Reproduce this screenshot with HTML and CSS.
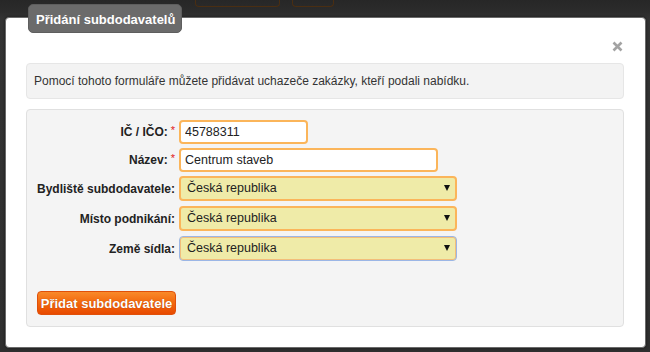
FILE: index.html
```html
<!DOCTYPE html>
<html lang="cs">
<head>
<meta charset="utf-8">
<title>Přidání subdodavatelů</title>
<link rel="stylesheet" href="styles.css">
</head>
<body>
<div class="backdrop-top">
  <span class="bg-btn bg-btn-a"></span>
  <span class="bg-btn bg-btn-b"></span>
</div>
<div class="modal">
  <div class="modal-title">Přidání subdodavatelů</div>
  <span class="modal-close" aria-label="Zavřít"><svg width="11" height="11" viewBox="0 0 11 11"><path d="M1.5 1.5 L9.5 9.5 M9.5 1.5 L1.5 9.5" stroke="#a3a3a3" stroke-width="2.6" stroke-linecap="butt" fill="none"/></svg></span>
  <div class="info">Pomocí tohoto formuláře můžete přidávat uchazeče zakázky, kteří podali nabídku.</div>
  <div class="form-box">
    <div class="form-grid">
      <label class="lbl">IČ / IČO:<span class="req">*</span></label>
      <div class="field"><input class="txt txt-ico" type="text" value="45788311"></div>
      <label class="lbl">Název:<span class="req">*</span></label>
      <div class="field"><input class="txt txt-name" type="text" value="Centrum staveb"></div>
      <label class="lbl lbl-sel">Bydliště subdodavatele:</label>
      <div class="field"><div class="sel">Česká republika<span class="arrow"></span></div></div>
      <label class="lbl lbl-sel">Místo podnikání:</label>
      <div class="field"><div class="sel">Česká republika<span class="arrow"></span></div></div>
      <label class="lbl lbl-sel">Země sídla:</label>
      <div class="field"><div class="sel sel-focus">Česká republika<span class="arrow"></span></div></div>
    </div>
    <button class="btn-add" type="button">Přidat subdodavatele</button>
  </div>
</div>
</body>
</html>
```

FILE: styles.css
```css
* { box-sizing: border-box; }
html, body { margin: 0; padding: 0; }
body {
  width: 650px;
  height: 352px;
  overflow: hidden;
  background: linear-gradient(#272727 0, #2c2c2c 12px, #333 18px, #2f2f2f 100%);
  font-family: "Liberation Sans", Arial, sans-serif;
}
.backdrop-top {
  height: 7px;
  display: flex;
  gap: 12px;
  padding-left: 195px;
}
.bg-btn {
  display: block;
  height: 7px;
  border: 1px solid #4a2e12;
  border-top: none;
  border-radius: 0 0 4px 4px;
}
.bg-btn-a { width: 85px; }
.bg-btn-b { width: 42px; }
.modal {
  position: relative;
  margin: 10px 0 0 5px;
  width: 641px;
  height: 331px;
  background: #fff;
  border: 1px solid #6a6a6a;
  border-radius: 4px;
  padding: 45px 21px 0 20px;
  box-shadow: 0 0 3px rgba(0,0,0,0.5);
}
.modal-title {
  position: absolute;
  left: 22px;
  top: -14px;
  width: 154px;
  height: 29px;
  background: #6b6b6b;
  color: #fff;
  font-weight: bold;
  font-size: 13px;
  line-height: 29px;
  padding-left: 7px;
  border-radius: 5px;
  border: 1px solid #5e5e5e;
}
.modal-close {
  position: absolute;
  right: 22px;
  top: 23px;
  width: 11px;
  height: 11px;
  line-height: 0;
}
.info {
  height: 36px;
  background: #f3f3f3;
  border: 1px solid #e6e6e6;
  border-radius: 4px;
  font-size: 12px;
  color: #333;
  line-height: 34px;
  padding-left: 7px;
}
.form-box {
  margin-top: 10px;
  height: 218px;
  background: #f4f4f4;
  border: 1px solid #e0e0e0;
  border-radius: 4px;
  padding: 10px 0 0 10px;
}
.form-grid {
  display: grid;
  grid-template-columns: 138px auto;
  column-gap: 4px;
  row-gap: 4px;
  align-items: center;
}
.lbl {
  text-align: right;
  font-size: 12px;
  font-weight: bold;
  color: #222;
  white-space: nowrap;
}
.req {
  color: #e02020;
  font-weight: normal;
  font-size: 11px;
  margin-left: 3px;
  position: relative;
  top: -2px;
}
.field { display: flex; }
.txt {
  height: 24px;
  border: 2px solid #fbb55a;
  border-radius: 4px;
  background: #fff;
  font-family: "Liberation Sans", Arial, sans-serif;
  font-size: 12.5px;
  color: #222;
  padding: 0 4px;
  outline: none;
}
.txt-ico { width: 129px; }
.txt-name { width: 259px; }
.sel {
  position: relative;
  width: 278px;
  height: 25px;
  margin-bottom: 1px;
  border: 2px solid #fbb55a;
  border-radius: 4px;
  background: #efeba8;
  font-size: 12.5px;
  color: #222;
  line-height: 21px;
  padding-left: 6px;
}
.sel-focus {
  border: 1px solid #9bb6e6;
  box-shadow: inset 0 0 0 1px #f2be7a;
  padding-left: 7px;
  line-height: 23px;
}
.arrow {
  position: absolute;
  right: 5px;
  top: 7px;
  width: 0;
  height: 0;
  border-left: 3px solid transparent;
  border-right: 3px solid transparent;
  border-top: 6px solid #111;
}
.sel-focus .arrow { right: 6px; top: 8px; }
.btn-add {
  display: block;
  margin-top: 29px;
  width: 139px;
  height: 24px;
  border: 1px solid #e0500a;
  border-radius: 4px;
  background: linear-gradient(#f98a2a 0, #f36a10 45%, #e84a00 100%);
  color: #fff;
  font-family: "Liberation Sans", Arial, sans-serif;
  font-weight: bold;
  font-size: 13px;
  padding: 0;
  text-shadow: 0 0 1px rgba(120,40,0,0.6);
}
```
